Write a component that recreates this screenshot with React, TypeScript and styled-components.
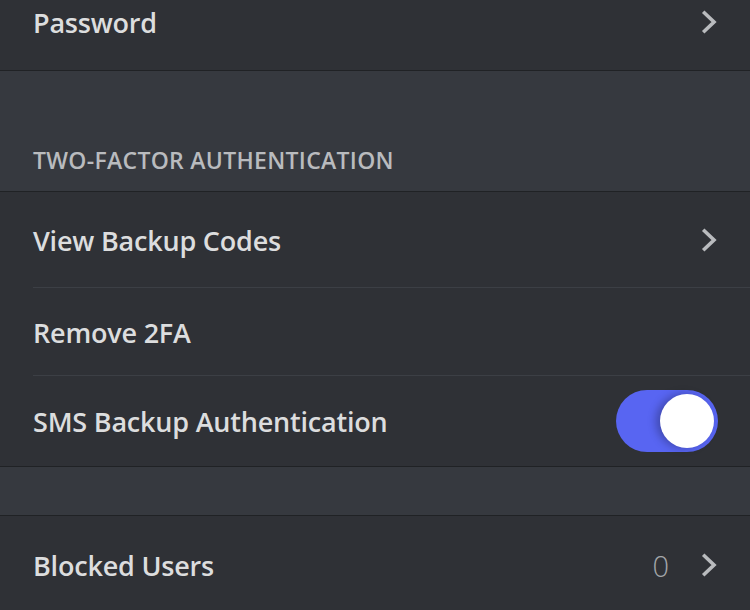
import React from "react";
import styled, { createGlobalStyle } from "styled-components";

const Global = createGlobalStyle`
  html, body { margin: 0; padding: 0; background: #36393f; }
  body { font-family: "Open Sans", "Noto Sans", sans-serif; }
  * { box-sizing: border-box; }
`;

const Page = styled.div`
  width: 750px;
  height: 610px;
  overflow: hidden;
  background: #36393f;
`;

const Scroller = styled.div`
  display: flex;
  flex-direction: column;
  margin-top: -26px;
`;

const Group = styled.div<{ $noTop?: boolean }>`
  display: flex;
  flex-direction: column;
  background: #2f3136;
  border-top: ${(p) => (p.$noTop ? "none" : "1px solid #202225")};
  border-bottom: 1px solid #202225;
`;

const Row = styled.div<{ $h: number; $sep?: boolean }>`
  height: ${(p) => p.$h}px;
  display: flex;
  align-items: center;
  padding: 0 33px;
  position: relative;
  ${(p) =>
    p.$sep
      ? `&::after {
    content: "";
    position: absolute;
    left: 33px;
    right: 0;
    bottom: 0;
    height: 1px;
    background: #3c3f45;
  }`
      : ""}
`;

const Label = styled.span`
  flex: 1;
  font-size: 27px;
  font-weight: 600;
  color: #dcddde;
  letter-spacing: -0.2px;
`;

const Value = styled.span`
  font-size: 29px;
  font-weight: 300;
  color: #a3a6aa;
  margin-right: 32px;
`;

const Spacer = styled.div<{ $h: number }>`
  height: ${(p) => p.$h}px;
`;

const SectionHeader = styled.div`
  height: 120px;
  display: flex;
  align-items: flex-end;
  padding: 0 33px 19px;
  font-size: 23px;
  line-height: 24px;
  font-weight: 600;
  color: #b9bbbe;
  text-transform: uppercase;
  letter-spacing: 0.3px;
`;

const Chevron = () => (
  <svg width="16" height="24" viewBox="0 0 16 24" style={{ display: "block" }}>
    <path
      d="M2.2 1.8 L13 12 L2.2 22.2"
      fill="none"
      stroke="#b9bbbe"
      strokeWidth="3.6"
      strokeLinecap="butt"
      strokeLinejoin="miter"
    />
  </svg>
);

const Track = styled.div<{ $on: boolean }>`
  width: 102px;
  height: 62px;
  border-radius: 31px;
  background: ${(p) => (p.$on ? "#5865f2" : "#72767d")};
  display: flex;
  align-items: center;
  justify-content: ${(p) => (p.$on ? "flex-end" : "flex-start")};
  padding: 0 4px;
  margin-right: -1px;
`;

const Knob = styled.div`
  width: 54px;
  height: 54px;
  border-radius: 50%;
  background: #ffffff;
  box-shadow: -4px 0 8px rgba(0, 0, 0, 0.28);
`;

export default function App() {
  return (
    <Page>
      <Global />
      <Scroller>
        <Group $noTop>
          <Row $h={96}>
            <Label>Password</Label>
            <Chevron />
          </Row>
        </Group>
        <SectionHeader>Two-Factor Authentication</SectionHeader>
        <Group>
          <Row $h={96} $sep>
            <Label>View Backup Codes</Label>
            <Chevron />
          </Row>
          <Row $h={88} $sep>
            <Label>Remove 2FA</Label>
          </Row>
          <Row $h={90}>
            <Label>SMS Backup Authentication</Label>
            <Track $on>
              <Knob />
            </Track>
          </Row>
        </Group>
        <Spacer $h={48} />
        <Group>
          <Row $h={98}>
            <Label>Blocked Users</Label>
            <Value>0</Value>
            <Chevron />
          </Row>
        </Group>
      </Scroller>
    </Page>
  );
}
